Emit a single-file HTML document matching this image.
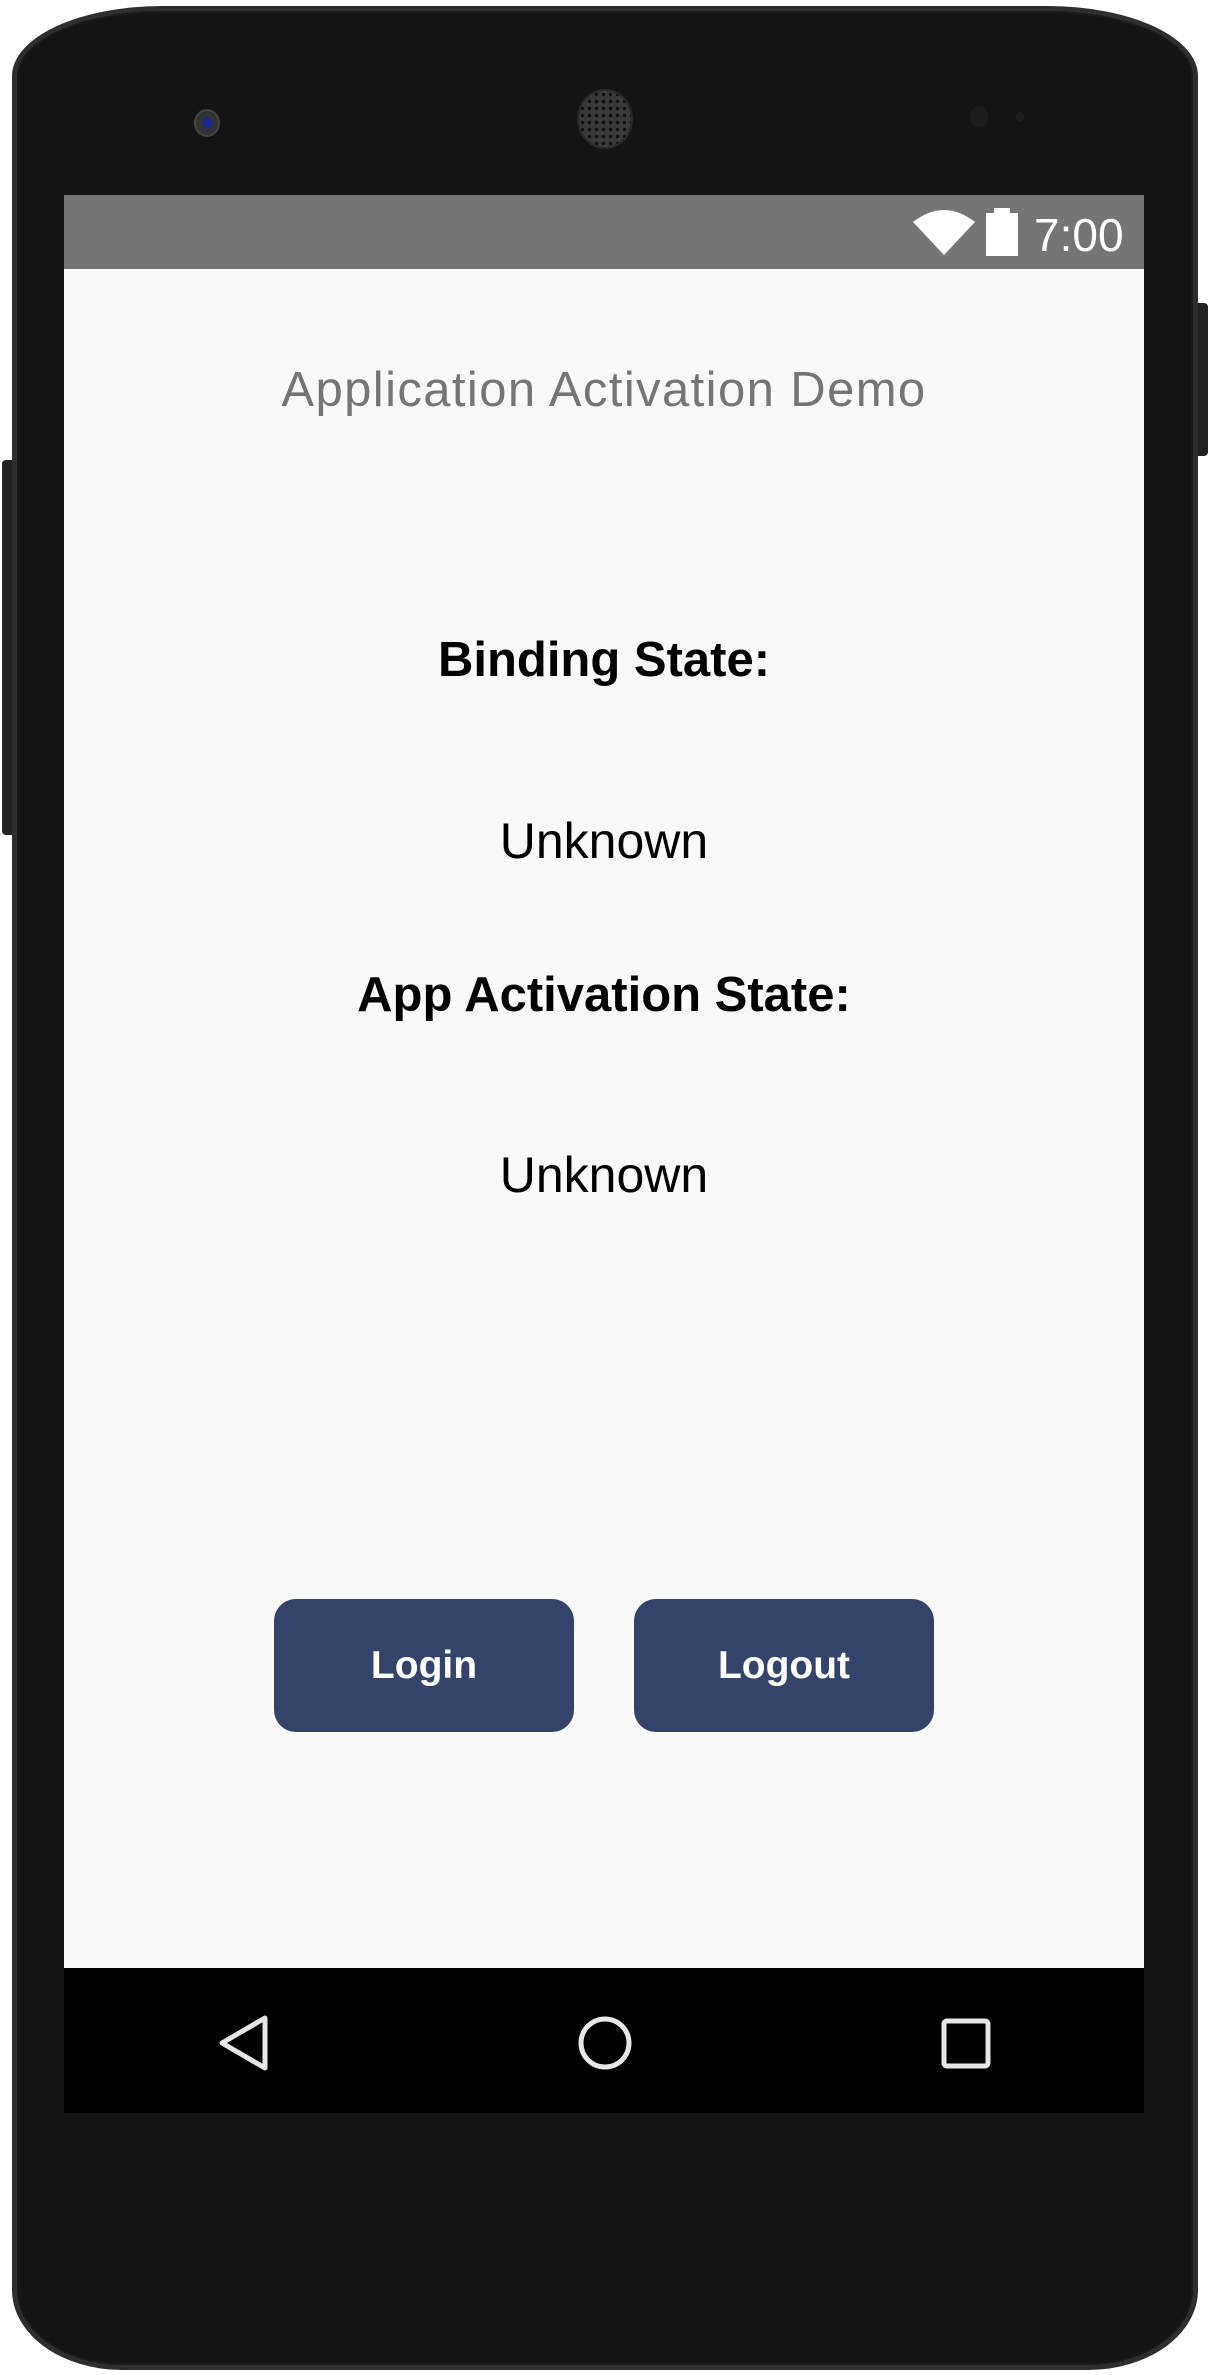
<!DOCTYPE html>
<html><head><meta charset="utf-8"><style>
*{margin:0;padding:0;box-sizing:border-box}
html,body{width:1210px;height:2375px;background:#fff;overflow:hidden;font-family:"Liberation Sans",sans-serif}
.abs{position:absolute}
.body{left:12px;top:6px;width:1186px;height:2364px;background:#141414;border-radius:150px 150px 110px 110px / 70px 70px 80px 80px;border:5px solid #2e2e2e;box-shadow:inset 0 0 0 2px #1a1a1a}
.screen{left:64px;top:269px;width:1080px;height:1699px;background:#f9f9f9}
.status{left:64px;top:195px;width:1080px;height:74px;background:#757575}
.nav{left:64px;top:1968px;width:1080px;height:145px;background:#000}
.t{position:absolute;left:64px;width:1080px;text-align:center;line-height:1;white-space:nowrap}
.btn{position:absolute;top:1599px;height:133px;width:300px;background:#334369;border-radius:22px;color:#fff;font-weight:bold;font-size:39px;text-align:center;line-height:133px}
</style></head><body>
<div class="abs" style="left:1198px;top:303px;width:10px;height:153px;background:#222;border-radius:0 4px 4px 0"></div>
<div class="abs" style="left:2px;top:460px;width:12px;height:375px;background:#222;border-radius:4px 0 0 4px"></div>
<div class="abs body"></div>
<div class="abs" style="left:196px;top:111px;width:22px;height:24px;border-radius:50%;background:#333;box-shadow:0 0 0 2px #444"></div>
<div class="abs" style="left:202px;top:117px;width:10px;height:12px;border-radius:50%;background:#1b2a8a"></div>
<div class="abs" style="left:579px;top:91px;width:52px;height:56px;border-radius:50%;background:radial-gradient(circle,#111 1.5px,#3a3a3a 2px) 0 0/7px 7px;box-shadow:0 0 0 2px #2a2a2a"></div>
<div class="abs" style="left:970px;top:106px;width:18px;height:22px;border-radius:50%;background:#1c1c1c"></div>
<div class="abs" style="left:1016px;top:112px;width:8px;height:10px;border-radius:50%;background:#1e1e1e"></div>
<div class="abs status"></div>
<svg class="abs" style="left:913px;top:208px" width="62" height="47" viewBox="0 0 62 47"><path d="M0 14 Q31 -10 62 14 L31 47 Z" fill="#fff"/></svg>
<div class="abs" style="left:994px;top:208px;width:16px;height:6px;background:#fff"></div>
<div class="abs" style="left:986px;top:213px;width:32px;height:43px;background:#fff"></div>
<div class="abs" style="left:1034px;top:212px;color:#fff;font-size:46px;line-height:46px">7:00</div>
<div class="abs screen"></div>
<div class="t" style="top:366px;font-size:49px;letter-spacing:1.4px;color:#757575">Application Activation Demo</div>
<div class="t" style="top:636px;font-size:49px;font-weight:bold;color:#000">Binding State:</div>
<div class="t" style="top:816px;font-size:50px;color:#000">Unknown</div>
<div class="t" style="top:971px;font-size:49px;font-weight:bold;color:#000">App Activation State:</div>
<div class="t" style="top:1150px;font-size:50px;color:#000">Unknown</div>
<div class="btn" style="left:274px">Login</div>
<div class="btn" style="left:634px">Logout</div>
<div class="abs nav"></div>
<svg class="abs" style="left:0;top:1968px" width="1210" height="145">
<path d="M265 50 L265 100 L222 75 Z" fill="none" stroke="#e6e6e6" stroke-width="5" stroke-linejoin="round"/>
<circle cx="605" cy="75" r="24" fill="none" stroke="#e6e6e6" stroke-width="5"/>
<rect x="944" y="53" width="44" height="45" rx="3" fill="none" stroke="#e6e6e6" stroke-width="5"/>
</svg>
</body></html>
